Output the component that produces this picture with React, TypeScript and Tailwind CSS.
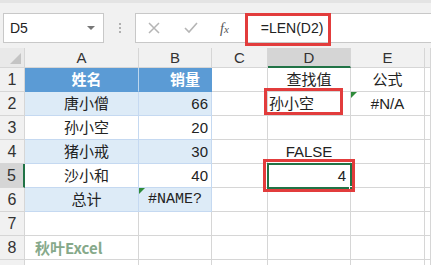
import React from "react";

const F = { fontFamily: '"Liberation Sans", "Noto Sans CJK SC", sans-serif' };

type CellProps = { className?: string; children?: React.ReactNode; style?: React.CSSProperties };
const Cell = ({ className = "", children, style }: CellProps) => (
  <div className={`flex items-center border-r border-b text-[15px] leading-none ${className}`} style={style}>
    {children}
  </div>
);

const Tri = ({ className = "" }: { className?: string }) => (
  <div
    className={`absolute w-0 h-0 border-t-[6px] border-r-[6px] border-t-[#2e8b3a] border-r-transparent ${className}`}
  />
);

export default function App() {
  const rowH = [1, 2, 3, 4, 5, 6, 7, 8, 9];
  const gridLine = "border-[#d6d6d6]";
  const tblLine = "border-[#c5d9f1]";
  const data: [string, string, string][] = [
    ["唐小僧", "66", "band"],
    ["孙小空", "20", "white"],
    ["猪小戒", "30", "band"],
    ["沙小和", "40", "white"],
  ];
  return (
    <div className="w-[431px] h-[265px] overflow-hidden bg-white relative text-[#222]" style={F}>
      {/* toolbar */}
      <div className="h-[48px] bg-[#f1f1f1] border-t-[3px] border-[#e4e4e4] flex items-start pt-[10px] relative">
        <div className="ml-[3px] w-[101px] h-[30px] bg-white border border-[#c8c8c8] flex items-center pl-[6px] text-[14px] relative">
          D5
          <div className="absolute right-[8px] top-[12px] w-0 h-0 border-l-[4px] border-r-[4px] border-t-[4px] border-l-transparent border-r-transparent border-t-[#777]" />
        </div>
        <div className="w-[31px] h-[30px] flex flex-col items-center justify-center gap-[2px]">
          <div className="w-[2px] h-[2px] bg-[#b0b0b0]" />
          <div className="w-[2px] h-[2px] bg-[#b0b0b0]" />
          <div className="w-[2px] h-[2px] bg-[#b0b0b0]" />
        </div>
        <div className="flex-1 h-[30px] bg-white border border-[#c8c8c8] border-r-0 flex items-center">
          <svg width="12" height="12" viewBox="0 0 12 12" className="ml-[12px]">
            <path d="M1 1 L11 11 M11 1 L1 11" stroke="#b5b5b5" strokeWidth="1.5" />
          </svg>
          <svg width="14" height="12" viewBox="0 0 14 12" className="ml-[24px]">
            <path d="M1 6 L5 10 L13 1" stroke="#b5b5b5" strokeWidth="1.6" fill="none" />
          </svg>
          <span
            className="ml-[22px] text-[14px] italic text-[#555]"
            style={{ fontFamily: '"Liberation Serif", serif' }}
          >
            f<span className="text-[11px]">x</span>
          </span>
          <span className="ml-[32px] text-[14px] text-[#222]">=LEN(D2)</span>
        </div>
        <div className="absolute left-[245px] top-[10px] w-[86px] h-[33px] border-[3px] border-[#e23c3c]" />
      </div>

      {/* grid */}
      <div className="grid grid-cols-[25px_114px_73px_56px_83px_74px_1fr] grid-rows-[20px_repeat(9,24px)] relative">
        {/* header row */}
        <Cell className={`bg-[#e9e9e9] ${gridLine} relative`}>
          <div className="absolute right-[3px] bottom-[3px] w-0 h-0 border-l-transparent border-b-[#c4c4c4]" style={{ borderLeftWidth: 11, borderBottomWidth: 11, borderTopWidth: 0, borderRightWidth: 0, borderStyle: "solid" }} />
        </Cell>
        {["A", "B", "C"].map((c) => (
          <Cell key={c} className={`bg-[#f1f1f1] ${gridLine} justify-center text-[#333]`}>
            {c}
          </Cell>
        ))}
        <Cell className={`bg-[#d5d5d5] border-b-2 border-b-[#217346] border-r-[#d6d6d6] justify-center text-[#333]`}>D</Cell>
        <Cell className={`bg-[#f1f1f1] ${gridLine} justify-center text-[#333]`}>E</Cell>
        <Cell className={`bg-[#f1f1f1] ${gridLine}`} />

        {rowH.map((r) => {
          const isSel = r === 5;
          const rh = (
            <Cell
              key={`h${r}`}
              className={`${isSel ? "bg-[#d5d5d5] border-r-2 border-r-[#217346] border-b-[#d6d6d6]" : `bg-[#f1f1f1] ${gridLine}`} justify-center text-[#333] text-[16px]`}
            >
              {r < 9 ? r : null}
            </Cell>
          );
          let a: React.ReactNode = null;
          let b: React.ReactNode = null;
          if (r === 1) {
            a = (
              <Cell key="a" className="bg-[#5b9bd5] border-[#5b9bd5] border-r-white/60 justify-center text-white font-bold pl-[10px]">
                姓名
              </Cell>
            );
            b = (
              <Cell key="b" className="bg-[#5b9bd5] border-[#5b9bd5] justify-center text-white font-bold pl-[20px]">
                销量
              </Cell>
            );
          } else if (r >= 2 && r <= 5) {
            const [n, v, t] = data[r - 2];
            const bg = t === "band" ? "bg-[#ddebf7]" : "bg-white";
            a = (
              <Cell key="a" className={`${bg} ${tblLine} justify-center pl-[10px]`}>
                {n}
              </Cell>
            );
            b = (
              <Cell key="b" className={`${bg} ${tblLine} justify-end pr-[3px]`}>
                {v}
              </Cell>
            );
          } else if (r === 6) {
            a = (
              <Cell key="a" className={`bg-[#ddebf7] ${tblLine} justify-center pl-[10px]`}>
                总计
              </Cell>
            );
            b = (
              <Cell
                key="b"
                className={`bg-[#ddebf7] ${tblLine} justify-center text-[13px] relative`}
                style={{ fontFamily: '"Liberation Mono", "Noto Sans CJK SC", monospace' }}
              >
                <Tri className="left-0 top-0" />
                #NAME?
              </Cell>
            );
          } else {
            a = (
              <Cell key="a" className={`${gridLine} pl-[10px]`}>
                {r === 8 ? (
                  <span className="font-bold text-[#86a98a] text-[15px]" style={{ fontFamily: '"Noto Sans CJK SC", "Liberation Sans", sans-serif' }}>
                    秋叶Excel
                  </span>
                ) : null}
              </Cell>
            );
            b = <Cell key="b" className={gridLine} />;
          }
          const c = <Cell key="c" className={gridLine} />;
          let d: React.ReactNode = <Cell key="d" className={gridLine} />;
          let e: React.ReactNode = <Cell key="e" className={gridLine} />;
          if (r === 1) {
            d = (
              <Cell key="d" className={`${gridLine} justify-center`}>
                查找值
              </Cell>
            );
            e = (
              <Cell key="e" className={`${gridLine} justify-center`}>
                公式
              </Cell>
            );
          } else if (r === 2) {
            d = (
              <Cell key="d" className={`${gridLine} pl-[1px]`}>
                孙小空
              </Cell>
            );
            e = (
              <Cell key="e" className={`${gridLine} justify-center relative`}>
                <Tri className="left-0 top-0" />
                #N/A
              </Cell>
            );
          } else if (r === 4) {
            d = (
              <Cell key="d" className={`${gridLine} justify-center`}>
                FALSE
              </Cell>
            );
          } else if (r === 5) {
            d = (
              <Cell key="d" className={`${gridLine} justify-end pr-[4px] relative`}>
                4
              </Cell>
            );
          }
          const f = <Cell key="f" className={gridLine} />;
          return <React.Fragment key={r}>{rh}{a}{b}{c}{d}{e}{f}</React.Fragment>;
        })}

        {/* selection D5 */}
        <div className="absolute left-[267px] top-[115px] w-[85px] h-[26px] border-2 border-[#217346]" />
        <div className="absolute left-[349px] top-[138px] w-[5px] h-[5px] bg-[#217346] border border-white" />
        {/* red boxes */}
        <div className="absolute left-[263px] top-[111px] w-[92px] h-[33px] border-[3px] border-[#e23c3c]" />
        <div className="absolute left-[264px] top-[40px] w-[79px] h-[27px] border-[3px] border-[#e23c3c]" />
      </div>
    </div>
  );
}
